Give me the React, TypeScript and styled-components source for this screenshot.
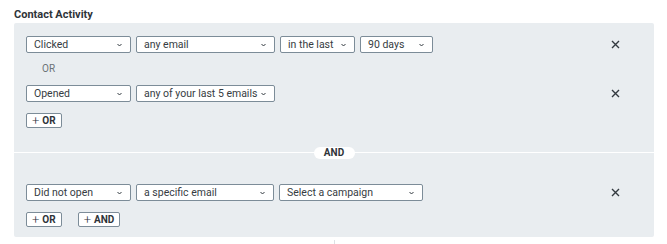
import React from 'react';
import styled, { createGlobalStyle } from 'styled-components';

const GlobalStyle = createGlobalStyle`
  html, body {
    margin: 0;
    padding: 0;
    background: #ffffff;
    font-family: Roboto, 'Liberation Sans', Arial, sans-serif;
    color: #333a40;
  }
`;

const Page = styled.div`
  width: 667px;
  height: 244px;
  overflow: hidden;
  padding: 9px 13px 0 14px;
  box-sizing: border-box;
`;

const Title = styled.h3`
  margin: 0 0 3px;
  height: 11px;
  font-size: 11px;
  line-height: 11px;
  font-weight: 700;
  color: #2f3439;
`;

const Panel = styled.div`
  width: 640px;
  background: #e9edf0;
  border-radius: 2px;
`;

const Group = styled.div<{ $top: number; $bottom: number }>`
  padding: ${(p) => p.$top}px 34px ${(p) => p.$bottom}px 12px;
  display: flex;
  flex-direction: column;
`;

const Row = styled.div`
  display: flex;
  align-items: center;
  height: 17px;
`;

const Fields = styled.div`
  display: flex;
  gap: 5px;
  flex: 1;
`;

const Select = styled.div<{ $w: number }>`
  width: ${(p) => p.$w}px;
  height: 17px;
  box-sizing: border-box;
  border: 1px solid #7c8c98;
  border-radius: 2px;
  background: #ffffff;
  display: flex;
  align-items: center;
  justify-content: space-between;
  padding: 0 8px 0 7px;
  font-size: 10.5px;
  color: #363c42;
  white-space: nowrap;
`;

const Remove = styled.button`
  border: 0;
  background: none;
  padding: 0;
  width: 10px;
  height: 10px;
  display: flex;
  align-items: center;
  justify-content: center;
  cursor: pointer;
`;

const OrLabel = styled.div`
  height: 32px;
  line-height: 32px;
  padding-left: 16px;
  font-size: 10px;
  color: #6b7277;
`;

const Actions = styled.div`
  display: flex;
  gap: 16px;
  margin-top: 11px;
`;

const AddButton = styled.button`
  height: 15px;
  box-sizing: border-box;
  border: 1px solid #7c8c98;
  border-radius: 2px;
  background: #ffffff;
  padding: 0 5px 0 5px;
  font-family: Roboto, 'Liberation Sans', Arial, sans-serif;
  font-size: 10px;
  font-weight: 700;
  color: #2f3439;
  display: flex;
  align-items: center;
  gap: 3px;
  cursor: pointer;

  span {
    font-weight: 300;
    font-size: 13px;
    line-height: 13px;
  }
`;

const Divider = styled.div`
  position: relative;
  height: 24px;
  display: flex;
  align-items: center;
  justify-content: center;

  &::before {
    content: '';
    position: absolute;
    left: 0;
    right: 0;
    top: 11px;
    height: 1px;
    background: #ffffff;
  }
`;

const Pill = styled.div`
  position: relative;
  width: 41px;
  height: 12px;
  border-radius: 6px;
  background: #ffffff;
  font-size: 10px;
  font-weight: 700;
  line-height: 12px;
  text-align: center;
  color: #2f3439;
`;

const Tail = styled.div`
  width: 1px;
  height: 6px;
  margin: 3px 0 0 320px;
  background: #dde1e4;
`;

const Chevron = () => (
  <svg width="5" height="4" viewBox="0 0 5 4">
    <path d="M0.5 1 L2.5 3 L4.5 1" fill="none" stroke="#333a40" strokeWidth="1" />
  </svg>
);

const Cross = () => (
  <svg width="9" height="9" viewBox="0 0 9 9">
    <path d="M1 1 L8 8 M8 1 L1 8" stroke="#333a40" strokeWidth="1.4" />
  </svg>
);

interface Field {
  label: string;
  width: number;
}

const Condition: React.FC<{ fields: Field[] }> = ({ fields }) => (
  <Row>
    <Fields>
      {fields.map((f) => (
        <Select key={f.label} $w={f.width}>
          <span>{f.label}</span>
          <Chevron />
        </Select>
      ))}
    </Fields>
    <Remove aria-label="Remove">
      <Cross />
    </Remove>
  </Row>
);

export default function App() {
  return (
    <Page>
      <GlobalStyle />
      <Title>Contact Activity</Title>
      <Panel>
        <Group $top={13} $bottom={13}>
          <Condition
            fields={[
              { label: 'Clicked', width: 105 },
              { label: 'any email', width: 139 },
              { label: 'in the last', width: 75 },
              { label: '90 days', width: 73 },
            ]}
          />
          <OrLabel>OR</OrLabel>
          <Condition
            fields={[
              { label: 'Opened', width: 105 },
              { label: 'any of your last 5 emails', width: 139 },
            ]}
          />
          <Actions>
            <AddButton>
              <span>+</span>OR
            </AddButton>
          </Actions>
        </Group>
        <Divider>
          <Pill>AND</Pill>
        </Divider>
        <Group $top={19} $bottom={10}>
          <Condition
            fields={[
              { label: 'Did not open', width: 105 },
              { label: 'a specific email', width: 138 },
              { label: 'Select a campaign', width: 144 },
            ]}
          />
          <Actions>
            <AddButton>
              <span>+</span>OR
            </AddButton>
            <AddButton>
              <span>+</span>AND
            </AddButton>
          </Actions>
        </Group>
      </Panel>
      <Tail />
    </Page>
  );
}
